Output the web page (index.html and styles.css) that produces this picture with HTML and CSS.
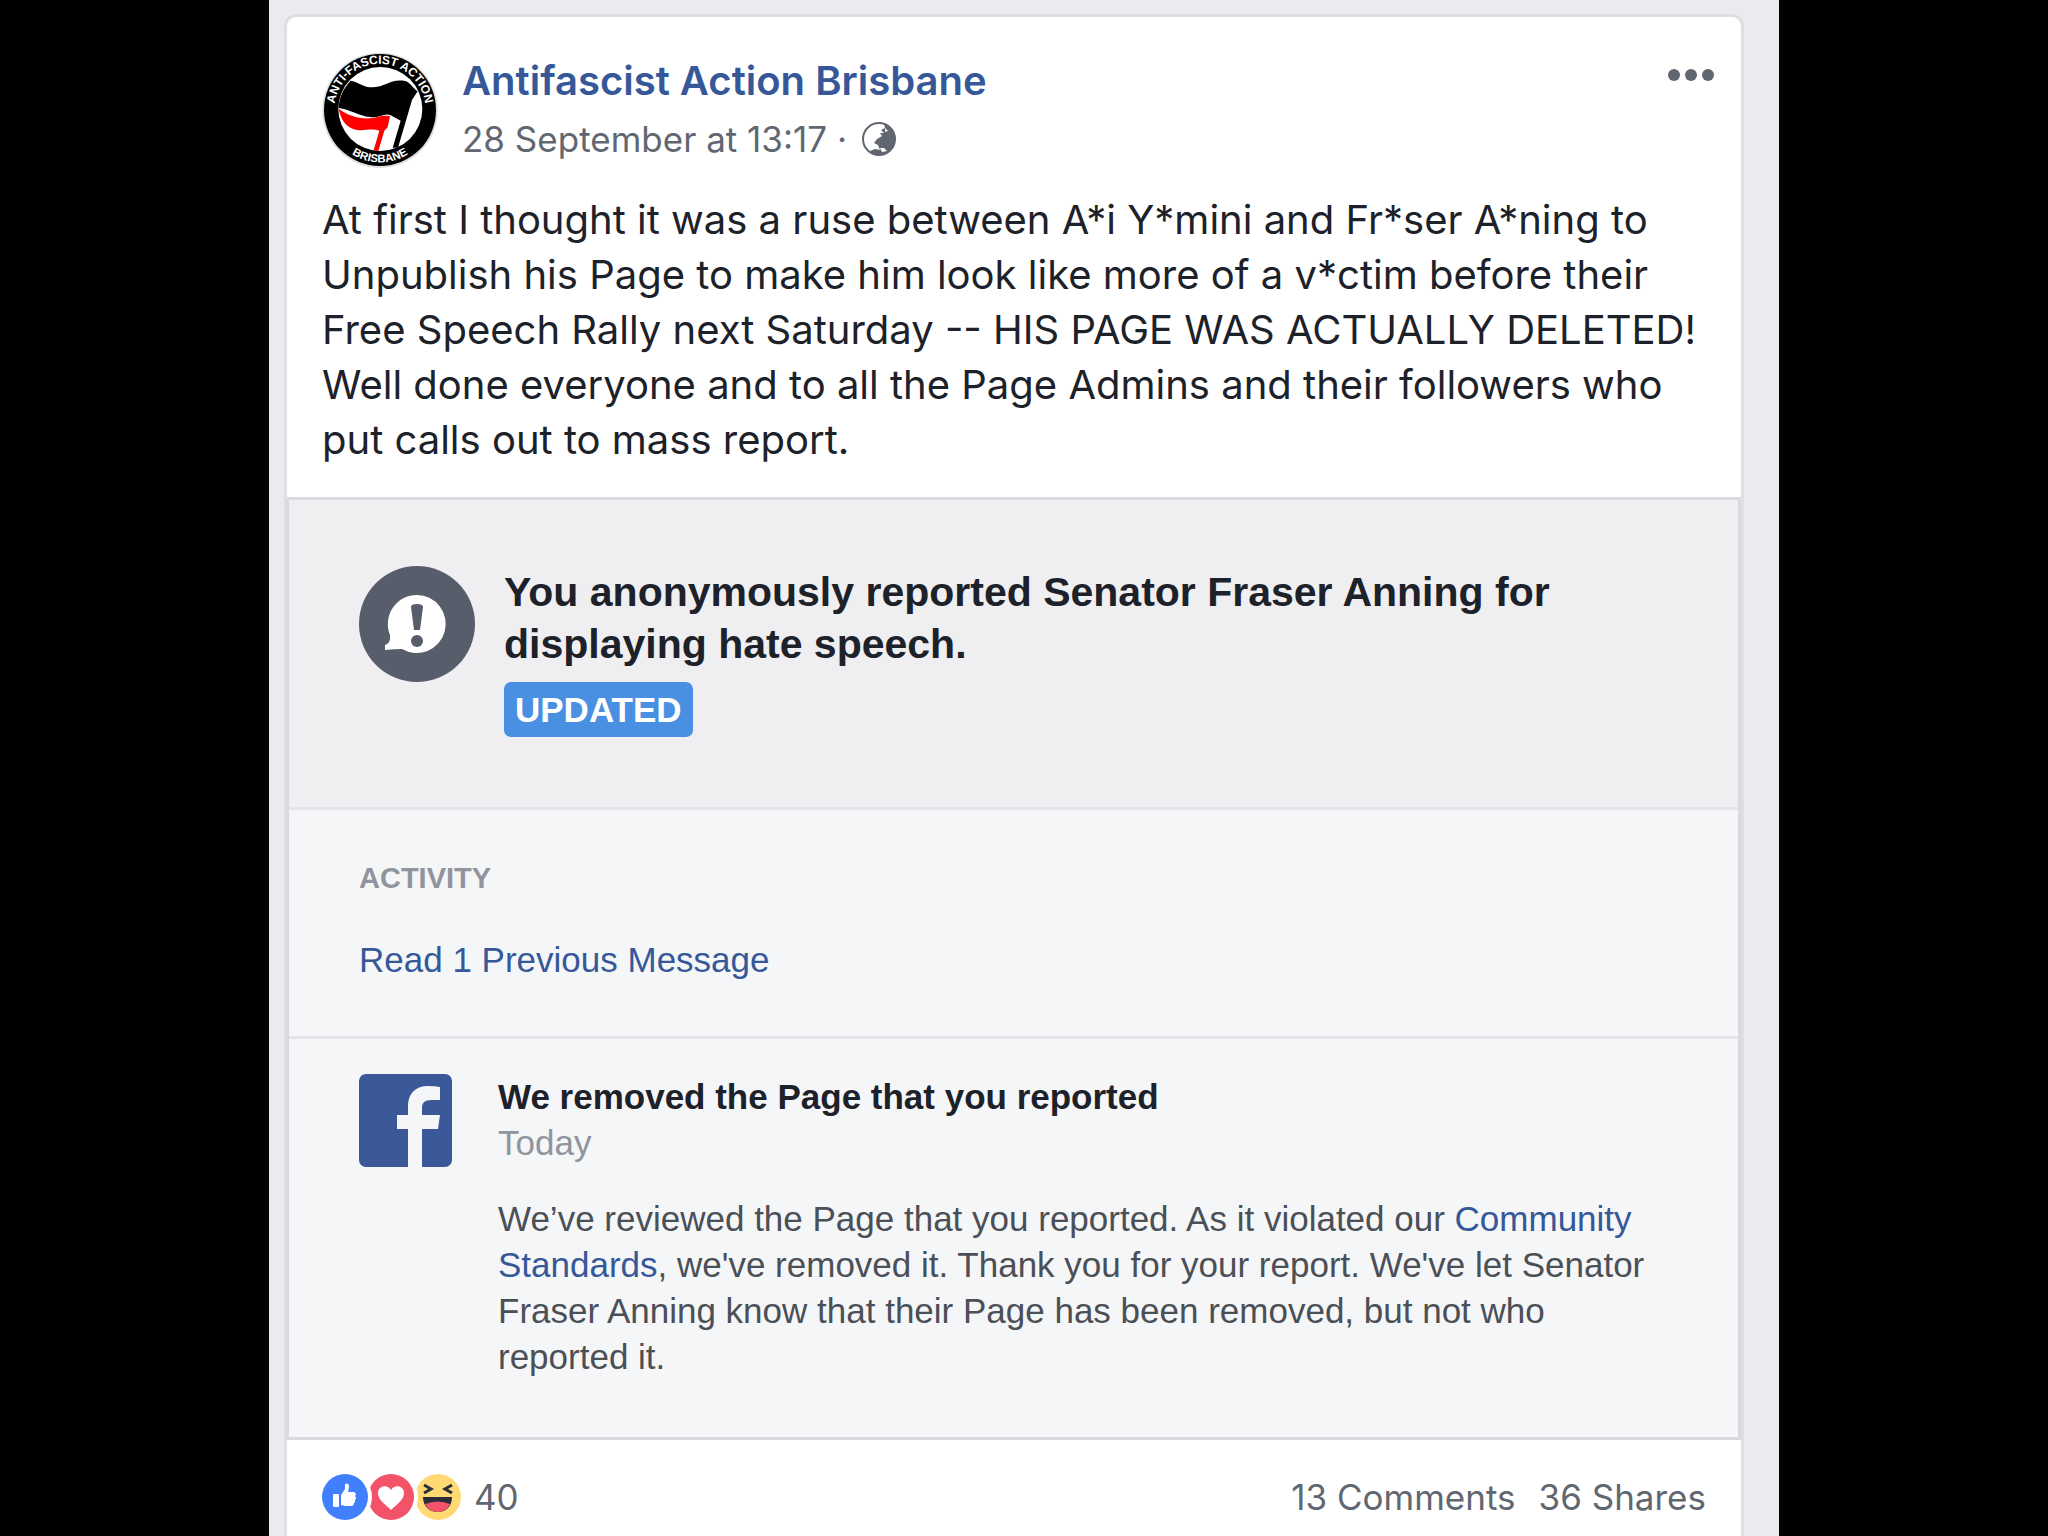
FILE: index.html
```html
<!DOCTYPE html>
<html lang="en">
<head>
    <meta charset="UTF-8">
    <meta name="viewport" content="width=device-width, initial-scale=1.0">
    <title>Antifascist Action Brisbane</title>
    <link rel="stylesheet" href="styles.css">
</head>
<body>
    <main class="page">
        <article class="post">
            <header class="post-header">
                <svg class="avatar" viewBox="36 36 348 348" role="img" aria-label="Antifascist Action Brisbane">
                    <defs>
                        <path id="arc-top" d="M76 180 A137 137 0 0 1 344 180"/>
                        <path id="arc-bottom" d="M110 331 A157 157 0 0 0 310 331"/>
                    </defs>
                    <circle cx="210" cy="211" r="173" fill="#ddd"/>
                    <circle cx="210" cy="210" r="168" fill="#000"/>
                    <circle cx="211" cy="207" r="126" fill="#fff"/>
                    <path d="M122 122 C150 128 160 143 190 142 C230 140 240 116 285 123 C300 126 310 146 323 154 L306 180 L264 323 L248 323 L272 242 L242 226 C225 216 205 236 180 231 C145 228 120 208 86 204 C88 170 100 145 122 122 Z" fill="#000"/>
                    <path d="M86 206 C110 225 145 237 180 235 C205 233 215 224 240 229 L233 262 L223 272 L205 333 L191 331 L208 272 C185 264 165 274 140 270 C110 264 92 240 86 206 Z" fill="#f00"/>
                    <text class="badge-top"><textPath href="#arc-top" startOffset="50%">ANTI-FASCIST ACTION</textPath></text>
                    <text class="badge-bottom"><textPath href="#arc-bottom" startOffset="50%">BRISBANE</textPath></text>
                </svg>
                <div class="post-info">
                    <a class="post-author" href="#">Antifascist Action Brisbane</a>
                    <div class="post-meta">
                        <span>28 September at 13:17 ·</span>
                        <svg class="globe" viewBox="0 0 36 36" aria-label="Public">
                            <circle cx="18" cy="18" r="16" fill="#fff" stroke="#616770" stroke-width="2"/>
                            <path d="M23 3 C31 6 35 12 34 20 C33 28 27 34 19 34 C15 34 11 33 9 30 L14 28 L19 29 L17 24 L13 22 L16 18 L21 15 L19 12 L23 12 L20 9 L24 7 Z" fill="#616770"/>
                            <path d="M24 7 l3 3 l-3 1 Z M19 27 l4 0 l3 3 l-5 1 Z" fill="#fff"/>
                        </svg>
                    </div>
                </div>
                <button class="more" type="button" aria-label="More options">
                    <span></span><span></span><span></span>
                </button>
            </header>

            <p class="post-text">
                At first I thought it was a ruse between A*i Y*mini and Fr*ser A*ning to<br>
                Unpublish his Page to make him look like more of a v*ctim before their<br>
                Free Speech Rally next Saturday -- HIS PAGE WAS ACTUALLY DELETED!<br>
                Well done everyone and to all the Page Admins and their followers who<br>
                put calls out to mass report.
            </p>

            <section class="report">
                <div class="report-top">
                    <svg class="report-icon" viewBox="0 0 116 116" aria-hidden="true">
                        <circle cx="58" cy="58" r="58" fill="#585d6c"/>
                        <path d="M58 29 A29 29 0 1 1 43 83 Q35 83 26 84 L26 79 Q32 77 31 69 A29 29 0 0 1 58 29 Z" fill="#fff"/>
                        <path d="M52 41 Q52 38 58 38 Q64 38 64 41 L61 64 L55 64 Z" fill="#585d6c"/>
                        <circle cx="58" cy="75" r="6" fill="#585d6c"/>
                    </svg>
                    <div>
                        <h2>You anonymously reported Senator Fraser Anning for<br>displaying hate speech.</h2>
                        <span class="updated">UPDATED</span>
                    </div>
                </div>
                <div class="activity">
                    <h3>ACTIVITY</h3>
                    <a href="#">Read 1 Previous Message</a>
                </div>
                <div class="message">
                    <svg class="fb-logo" viewBox="0 0 93 93" aria-hidden="true">
                        <rect width="93" height="93" rx="7" fill="#3b5998"/>
                        <path d="M49 93 V55 H38 V41 H49 V32 C49 19 57 12 69 12 Q76 12 81 13 V26 H73 C65 26 63 29 63 34 V41 H81 L79 55 H63 V93 Z" fill="#f5f6f8"/>
                    </svg>
                    <div class="message-body">
                        <h4>We removed the Page that you reported</h4>
                        <div class="date">Today</div>
                        <p>
                            We’ve reviewed the Page that you reported. As it violated our <a href="#">Community
                            Standards</a>, we've removed it. Thank you for your report. We've let Senator
                            Fraser Anning know that their Page has been removed, but not who
                            reported it.
                        </p>
                    </div>
                </div>
            </section>

            <footer class="post-footer">
                <svg class="reactions" viewBox="1 0 141 48" role="img" aria-label="Like, Love, Haha">
                    <circle cx="117" cy="24" r="23" fill="#ffda74"/>
                    <path d="M103 12 L110 16 L103 20 M131 12 L124 16 L131 20" fill="none" stroke="#2b2d38" stroke-width="3"/>
                    <path d="M102 24 H131 C131 33 125 39 117 39 C108 39 102 33 102 24 Z" fill="#2b2d38"/>
                    <path d="M104 31 Q117 26 129 31 Q125 39 117 39 Q108 39 104 31 Z" fill="#f55369"/>
                    <circle cx="70" cy="24" r="27" fill="#fff"/>
                    <circle cx="70" cy="24" r="23" fill="#f35369"/>
                    <path d="M70 37 C65 32 57 27 57 20 C57 12 67 11 70 17 C73 11 83 12 83 20 C83 27 75 32 70 37 Z" fill="#fff"/>
                    <circle cx="24" cy="24" r="27" fill="#fff"/>
                    <circle cx="24" cy="24" r="23" fill="#4080ff"/>
                    <path d="M13 21 H17 Q18 21 18 22 V33 Q18 34 17 34 H13 Q12 34 12 33 V22 Q12 21 13 21 Z M20 22 L24 16 V11 Q28 9 28 14 L27 19 H33 Q36 20 34 23 Q36 25 34 27 Q35 29 33 30 Q33 33 30 33 H24 L20 32 Z" fill="#fff"/>
                </svg>
                <span class="count">40</span>
                <a class="comments" href="#">13 Comments</a>
                <a href="#">36 Shares</a>
            </footer>
        </article>
    </main>
</body>
</html>
```
FILE: styles.css
```css
* {
    box-sizing: border-box;
}

body {
    margin: 0;
    background-color: #000;
    font-family: Inter, sans-serif;
    color: #1d2129;
}

h2, h3, h4, p {
    margin: 0;
}

a {
    color: #365899;
    text-decoration: none;
}

svg {
    display: block;
    flex-shrink: 0;
}

.page {
    display: flex;
    max-width: 1510px;
    min-height: 100vh;
    margin: 0 auto;
    padding: 14px 35px 0 15px;
    background-color: #e9ebee;
}

.post {
    flex: 1;
    background-color: #fff;
    border: 3px solid #dddfe2;
    border-bottom: none;
    border-radius: 12px 12px 0 0;
}

.post-header {
    display: flex;
    align-items: flex-start;
    padding: 35px 27px 0 35px;
}

.avatar {
    width: 116px;
    height: 116px;
    margin-right: 24px;
}

.badge-top, .badge-bottom {
    font-family: "Liberation Sans", sans-serif;
    font-weight: bold;
    font-size: 36px;
    fill: #fff;
    text-anchor: middle;
}

.badge-bottom {
    font-size: 34px;
}

.post-info {
    flex: 1;
    line-height: 58px;
}

.post-author {
    display: block;
    font-size: 40px;
    font-weight: 600;
}

.post-meta {
    display: flex;
    align-items: center;
    gap: 14px;
    font-size: 35px;
    color: #616770;
}

.globe {
    width: 36px;
    height: 36px;
}

.more {
    display: flex;
    gap: 5px;
    margin-top: 17px;
    padding: 0;
    border: none;
    background: none;
    cursor: pointer;
}

.more span {
    width: 12px;
    height: 12px;
    border-radius: 50%;
    background-color: #616770;
}

.post-text {
    padding: 24px 35px 30px;
    font-size: 40px;
    line-height: 55px;
}

.report {
    border: 3px solid #d8dade;
    border-width: 3px 3px 3px 2px;
    background-color: #f5f6f8;
    font-family: "Liberation Sans", Arial, sans-serif;
}

.report-top {
    display: flex;
    gap: 29px;
    padding: 66px 70px 70px;
    background-color: #efeff1;
    border-bottom: 3px solid #e4e5e9;
}

.report-icon {
    width: 116px;
    height: 116px;
}

.report h2 {
    font-size: 41px;
    line-height: 52px;
}

.updated {
    display: inline-block;
    margin-top: 12px;
    padding: 0 11px;
    border-radius: 7px;
    background-color: #4a90e2;
    color: #fff;
    font-size: 35px;
    font-weight: bold;
    line-height: 55px;
}

.activity {
    padding: 45px 70px 53px;
    border-bottom: 3px solid #e4e5e9;
    font-size: 35px;
    line-height: 46px;
}

.activity h3 {
    margin-bottom: 36px;
    color: #90949c;
    font-size: 29px;
}

.message {
    display: flex;
    gap: 46px;
    padding: 35px 70px 57px;
    font-size: 35px;
    line-height: 46px;
}

.fb-logo {
    width: 93px;
    height: 93px;
}

.message h4 {
    font-size: 35px;
}

.date {
    color: #90949c;
}

.message p {
    margin-top: 30px;
    color: #4b4f56;
}

.post-footer {
    display: flex;
    align-items: center;
    gap: 23px;
    padding: 33px 35px 0;
    font-size: 35px;
    line-height: 48px;
    color: #616770;
}

.post-footer a {
    color: #616770;
}

.reactions {
    width: 141px;
    height: 48px;
}

.count {
    margin-left: -12px;
}

.comments {
    margin-left: auto;
}
```
